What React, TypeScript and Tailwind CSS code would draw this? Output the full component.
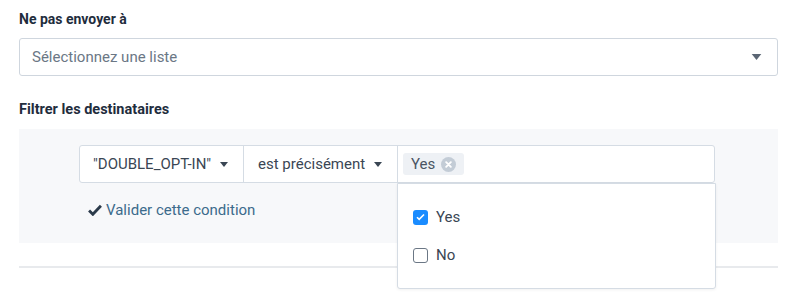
import React from 'react';

function Caret({ className = '' }: { className?: string }) {
  return (
    <svg width="8" height="5" viewBox="0 0 8 5" className={className}>
      <path d="M0 0h8L4 5z" fill="currentColor" />
    </svg>
  );
}

export default function App() {
  return (
    <div
      className="w-[800px] h-[303px] bg-white pl-[19px] pr-[22px] pt-[10px] text-[#1f2d3d] overflow-hidden"
      style={{ fontFamily: 'Roboto, "Liberation Sans", sans-serif' }}
    >
      <div className="text-[14px] font-bold leading-[18px]">Ne pas envoyer à</div>

      <div className="mt-[10px] h-[38px] flex items-center justify-between border border-[#cfd6de] rounded-[3px] pl-[12px] pr-[15px]">
        <span className="text-[15px] text-[#6b7785]">Sélectionnez une liste</span>
        <Caret className="text-[#5b6674] w-[11px] h-[6px]" />
      </div>

      <div className="mt-[25px] text-[14.5px] font-bold leading-[18px]">Filtrer les destinataires</div>

      <div className="mt-[10px] h-[114px] bg-[#f7f8fa] pl-[60px] pt-[16px]">
        <div className="flex h-[38px] w-[636px] bg-white border border-[#d5dce4] rounded-[3px] text-[15px] text-[#3a4654]">
          <div className="w-[164px] flex items-center gap-[9px] pl-[13px] border-r border-[#d5dce4]">
            <span>"DOUBLE_OPT-IN"</span>
            <Caret className="text-[#3a4654]" />
          </div>
          <div className="w-[154px] flex items-center gap-[9px] pl-[14px] border-r border-[#d5dce4]">
            <span>est précisément</span>
            <Caret className="text-[#3a4654]" />
          </div>
          <div className="relative flex-1 flex items-center pl-[5px]">
            <div className="h-[22px] flex items-center gap-[6px] bg-[#eef1f5] rounded-[3px] pl-[8px] pr-[8px]">
              <span className="text-[#4a5563]">Yes</span>
              <span className="w-[15px] h-[15px] rounded-full bg-[#c3ccd6] flex items-center justify-center">
                <svg width="7" height="7" viewBox="0 0 6 6">
                  <path d="M1 1l4 4M5 1l-4 4" stroke="white" strokeWidth="1.6" strokeLinecap="round" />
                </svg>
              </span>
            </div>
            <div className="absolute left-[-1px] top-[37px] w-[319px] h-[106px] bg-white border border-[#d5dce4] rounded-b-[3px] shadow-[0_1px_3px_rgba(0,0,0,0.06)] pl-[15px] pt-[25px] z-10">
              <label className="flex items-center gap-[8px] h-[16px]">
                <span className="w-[15px] h-[15px] rounded-[3px] bg-[#1a8cff] flex items-center justify-center">
                  <svg width="9" height="8" viewBox="0 0 9 8">
                    <path d="M1 4.2l2.2 2.2L8 1.5" stroke="white" strokeWidth="1.6" fill="none" />
                  </svg>
                </span>
                <span className="text-[15px] text-[#3a4654]">Yes</span>
              </label>
              <label className="mt-[22px] flex items-center gap-[8px] h-[16px]">
                <span className="w-[15px] h-[15px] rounded-[3px] border border-[#6b7785] bg-white" />
                <span className="text-[15px] text-[#3a4654]">No</span>
              </label>
            </div>
          </div>
        </div>

        <div className="mt-[16px] ml-[9px] flex items-center gap-[4px] text-[15px] text-[#3c6b8c]">
          <svg width="14" height="12" viewBox="0 0 13 11">
            <path d="M1 6l3.5 3.5L12 1.5" stroke="#2b3a4a" strokeWidth="2.6" fill="none" />
          </svg>
          <span>Valider cette condition</span>
        </div>
      </div>

      <div className="mt-[23px] h-[2px] bg-[#e8eaed]" />
    </div>
  );
}
